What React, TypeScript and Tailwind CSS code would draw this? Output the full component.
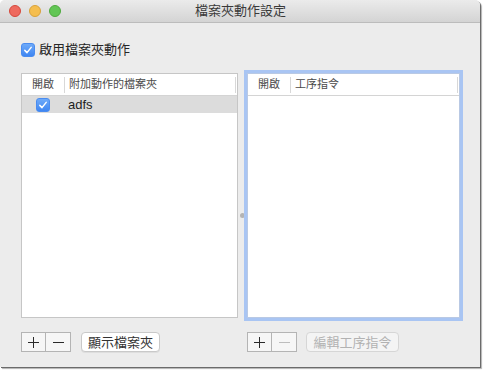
import React from "react";

const font = { fontFamily: '"Liberation Sans", "Noto Sans CJK TC", sans-serif' };

function CheckBox() {
  return (
    <span className="flex h-[14px] w-[14px] items-center justify-center rounded-[3px] border border-[#4a8cf0] bg-gradient-to-b from-[#6eaaf9] to-[#3f86f2]">
      <svg width="10" height="10" viewBox="0 0 10 10">
        <polyline points="1.8,5.4 4,7.6 8.2,2.4" fill="none" stroke="white" strokeWidth="1.5" strokeLinecap="round" strokeLinejoin="round" />
      </svg>
    </span>
  );
}

function PlusMinus({ minusDisabled }: { minusDisabled?: boolean }) {
  return (
    <div className="flex h-[20px] w-[50px] border border-[#b4b4b4] bg-[#f6f6f6]">
      <div className="flex w-[24px] items-center justify-center border-r border-[#b4b4b4]">
        <svg width="11" height="11" viewBox="0 0 11 11">
          <line x1="5.5" y1="0" x2="5.5" y2="11" stroke="#2a2a2a" strokeWidth="1" />
          <line x1="0" y1="5.5" x2="11" y2="5.5" stroke="#2a2a2a" strokeWidth="1" />
        </svg>
      </div>
      <div className="flex flex-1 items-center justify-center">
        <svg width="11" height="11" viewBox="0 0 11 11">
          <line x1="0" y1="5.5" x2="11" y2="5.5" stroke={minusDisabled ? "#bdbdbd" : "#2a2a2a"} strokeWidth="1" />
        </svg>
      </div>
    </div>
  );
}

function TableHeader({ title }: { title: string }) {
  return (
    <div className="flex h-[22px] items-center border-b border-[#d4d4d4] bg-white text-[11px] text-[#4a4a4a]">
      <div className="w-[42px] pl-[10px]">開啟</div>
      <div className="h-[16px] w-px bg-[#d8d8d8]" />
      <div className="flex-1 pl-[4px]">{title}</div>
      <div className="mr-[1px] h-[16px] w-px bg-[#d8d8d8]" />
    </div>
  );
}

export default function App() {
  return (
    <div className="h-[371px] w-[486px] bg-white" style={font}>
      <div className="flex h-[367px] w-[480px] flex-col rounded-t-[5px] bg-[#ececec] shadow-[1px_1px_0_#6b6b6b,2px_2px_1px_rgba(0,0,0,0.3)]">
        {/* title bar */}
        <div className="relative flex h-[23px] items-center rounded-t-[5px] border-b border-[#bcbcbc] bg-gradient-to-b from-[#ebebeb] to-[#d4d4d4]">
          <div className="flex gap-[8px] pl-[9px]">
            <span className="h-[12px] w-[12px] rounded-full border border-[#d5483c] bg-[#ee6a5f]" />
            <span className="h-[12px] w-[12px] rounded-full border border-[#d9a23a] bg-[#f5be4f]" />
            <span className="h-[12px] w-[12px] rounded-full border border-[#4ea93e] bg-[#62c655]" />
          </div>
          <div className="flex-1 pr-[60px] text-center text-[13px] text-[#3a3a3a]">檔案夾動作設定</div>
        </div>

        <div className="flex flex-1 flex-col pl-[21px] pr-[20px]">
          {/* enable checkbox */}
          <div className="mt-[20px] flex h-[14px] items-center gap-[4px] text-[13px] text-[#262626]">
            <CheckBox />
            <span>啟用檔案夾動作</span>
          </div>

          {/* tables */}
          <div className="mt-[16px] flex h-[245px]">
            <div className="flex w-[217px] flex-col border border-[#c6c6c6] bg-white">
              <TableHeader title="附加動作的檔案夾" />
              <div className="flex h-[17px] items-center bg-[#dcdcdc] text-[13px] text-[#1e1e1e]">
                <div className="flex w-[42px] justify-center">
                  <CheckBox />
                </div>
                <span className="pl-[4px]">adfs</span>
              </div>
            </div>

            <div className="flex w-[9px] justify-center pt-[140px]">
              <span className="h-[5px] w-[5px] rounded-full bg-[#b4b4b4]" />
            </div>

            <div className="flex w-[213px] flex-col border border-[#b9c9e4] bg-white shadow-[0_0_0_3px_#a9c5f3]">
              <TableHeader title="工序指令" />
            </div>
          </div>

          {/* buttons */}
          <div className="mt-[14px] flex h-[20px]">
            <div className="flex w-[226px] gap-[10px]">
              <PlusMinus />
              <button className="h-[20px] w-[79px] rounded-[4px] border border-[#c9c9c9] bg-white text-[13px] text-[#333] shadow-[0_1px_0_rgba(0,0,0,0.06)]">
                顯示檔案夾
              </button>
            </div>
            <div className="flex gap-[9px]">
              <PlusMinus minusDisabled />
              <button className="h-[20px] w-[93px] rounded-[4px] border border-[#d6d6d6] bg-[#f4f4f4] text-[13px] text-[#b2b2b2]">
                編輯工序指令
              </button>
            </div>
          </div>
        </div>
      </div>
    </div>
  );
}
